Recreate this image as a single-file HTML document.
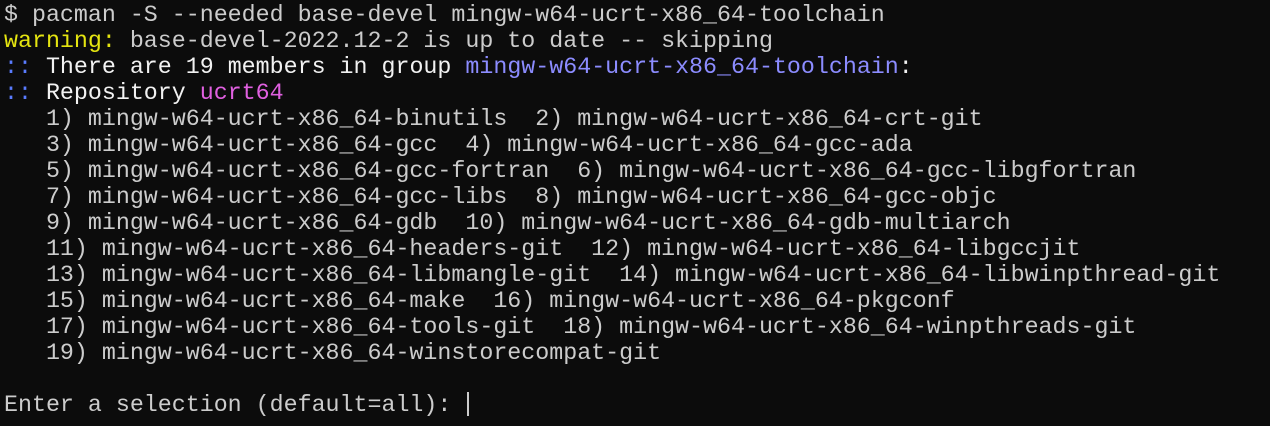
<!DOCTYPE html>
<html><head><style>
html,body{margin:0;padding:0;background:#0c0c0c;width:1270px;height:426px;overflow:hidden}
pre{margin:0;padding:2px 0 0 4px;font-family:"Liberation Mono",monospace;font-size:23.3px;line-height:26px;color:#cccccc}
.y{color:#e5e510}.b{color:#5a7cff}.lb{color:#8c8cff}.m{color:#e060e0}.w{color:#f2f2f2}
.cur{display:inline-block;width:2px;height:24px;background:#cccccc;vertical-align:-5px;margin-left:2px}
</style></head><body><pre>$ pacman -S --needed base-devel mingw-w64-ucrt-x86_64-toolchain
<span class="y">warning:</span> base-devel-2022.12-2 is up to date -- skipping
<span class="b">::</span><span class="w"> There are 19 members in group </span><span class="lb">mingw-w64-ucrt-x86_64-toolchain</span><span class="w">:</span>
<span class="b">::</span><span class="w"> Repository </span><span class="m">ucrt64</span>
   1) mingw-w64-ucrt-x86_64-binutils  2) mingw-w64-ucrt-x86_64-crt-git
   3) mingw-w64-ucrt-x86_64-gcc  4) mingw-w64-ucrt-x86_64-gcc-ada
   5) mingw-w64-ucrt-x86_64-gcc-fortran  6) mingw-w64-ucrt-x86_64-gcc-libgfortran
   7) mingw-w64-ucrt-x86_64-gcc-libs  8) mingw-w64-ucrt-x86_64-gcc-objc
   9) mingw-w64-ucrt-x86_64-gdb  10) mingw-w64-ucrt-x86_64-gdb-multiarch
   11) mingw-w64-ucrt-x86_64-headers-git  12) mingw-w64-ucrt-x86_64-libgccjit
   13) mingw-w64-ucrt-x86_64-libmangle-git  14) mingw-w64-ucrt-x86_64-libwinpthread-git
   15) mingw-w64-ucrt-x86_64-make  16) mingw-w64-ucrt-x86_64-pkgconf
   17) mingw-w64-ucrt-x86_64-tools-git  18) mingw-w64-ucrt-x86_64-winpthreads-git
   19) mingw-w64-ucrt-x86_64-winstorecompat-git

Enter a selection (default=all): <span class="cur"></span></pre></body></html>
